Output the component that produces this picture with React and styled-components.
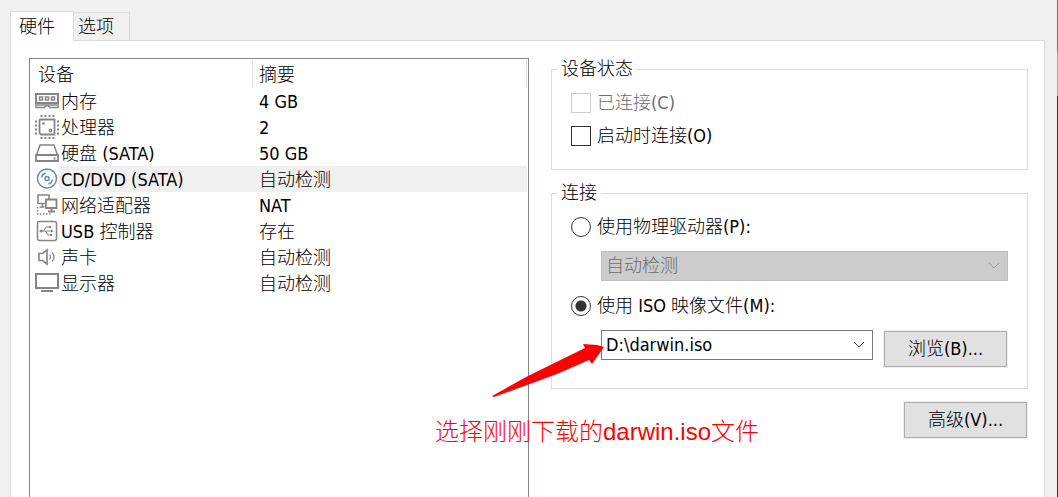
import React from "react";
import styled, { createGlobalStyle, css } from "styled-components";

const GlobalStyle = createGlobalStyle`
  *, *::before, *::after { box-sizing: border-box; }
  body {
    margin: 0;
    background: #f0f0f0;
    color: #000;
    font: 300 18px/22px "DejaVu Sans Condensed", "Noto Sans CJK SC", sans-serif;
  }
  button, select { font: inherit; color: inherit; }
`;

const Page = styled.div`
  position: relative;
  display: flex;
  min-height: 100vh;
`;

const Dialog = styled.main`
  flex: 1;
  min-width: 0;
  display: flex;
  flex-direction: column;
  padding: 11px 12px 0 10px;
`;

const BackdropEdge = styled.div`
  width: 1px;
  background: linear-gradient(#77707c 0 52px, #aaa 52px 96px, #352e31 96px);
`;

const TabList = styled.div`
  display: flex;
  align-items: flex-end;
  height: 29px;
`;

const Tab = styled.button`
  height: 28px;
  padding: 0 15px 0 4px;
  border: 1px solid #dcdcdc;
  border-width: 1px 1px 0 0;
  background: #f0f0f0;
  ${(p) =>
    p.$active &&
    css`
      height: 30px;
      margin-bottom: -1px;
      padding: 0 18px 0 8px;
      border-left-width: 1px;
      background: #fff;
      z-index: 1;
    `}
`;

const Panel = styled.section`
  flex: 1;
  display: grid;
  grid-template-columns: minmax(0, 500fr) minmax(0, 477fr);
  gap: 22px;
  padding: 17px 16px 0 18px;
  border: 1px solid #dcdcdc;
  border-bottom: 0;
  background: #fff;
`;

const DeviceList = styled.div`
  border: 1px solid #828790;
  border-bottom: 0;
  padding: 1px 1px 0 0;
`;

const DeviceTable = styled.table`
  width: 100%;
  table-layout: fixed;
  border-collapse: separate;
  border-spacing: 0;
`;

const HeadCell = styled.th`
  width: ${(p) => p.$width || "auto"};
  height: 28px;
  padding: 2px 0 0 ${(p) => p.$indent};
  border-right: 1px solid #e5e5e5;
  font-weight: inherit;
  text-align: left;
`;

const DeviceCell = styled.td`
  height: 26px;
  padding: 0 0 0 5px;
`;

const SummaryCell = styled.td`
  height: 26px;
  padding: 2px 0 0 6px;
  background: ${(p) => (p.$selected ? "#f0f0f0" : "none")};
`;

const Device = styled.div`
  display: flex;
  align-items: center;
`;

const DeviceName = styled.span`
  flex: 1;
  padding: 2px 0 0 2px;
  line-height: 24px;
  background: ${(p) => (p.$selected ? "#f0f0f0" : "none")};
`;

const DeviceIcon = styled.svg`
  flex: none;
  width: 24px;
  height: 24px;
  fill: none;
  stroke: #858585;
  stroke-width: 2;
`;

const Settings = styled.div`
  display: flex;
  flex-direction: column;
  gap: 12px;
`;

const Group = styled.fieldset`
  min-width: 0;
  margin: 0;
  padding: 6px 19px ${(p) => p.$bottom} 19px;
  border: 1px solid #dcdcdc;
`;

const GroupTitle = styled.legend`
  margin-left: -13px;
  padding: 0 4px 0 3px;
  line-height: 22px;
`;

const Option = styled.label`
  display: flex;
  align-items: center;
  gap: 6px;
  height: 33px;
  color: ${(p) => (p.$disabled ? "#6d6d6d" : "inherit")};
`;

const Check = styled.input`
  appearance: none;
  width: 20px;
  height: 20px;
  margin: 0;
  border: 1px solid #333;
  background: #fff;
  &:disabled { border-color: #ccc; }
`;

const Radio = styled(Check)`
  border-radius: 50%;
  &:checked { background: radial-gradient(circle, #333 0 5px, #fff 6px); }
`;

const FieldRow = styled.div`
  display: flex;
  align-items: flex-start;
  gap: 10px;
  margin: 8px 0 ${(p) => p.$bottom || "0"} 30px;
`;

const SelectBox = styled.div`
  position: relative;
  flex: 1;
  min-width: 0;
`;

const Select = styled.select`
  display: block;
  appearance: none;
  width: 100%;
  height: 30px;
  padding: 0 30px 0 4px;
  border: 1px solid #7a7a7a;
  border-radius: 0;
  background: #fff;
  &:disabled {
    border-color: #bfbfbf;
    background: #ccc;
    color: #6d6d6d;
    opacity: 1;
  }
`;

const Chevron = styled.svg`
  position: absolute;
  right: 8px;
  top: 11px;
  width: 12px;
  height: 8px;
  fill: none;
  stroke: ${(p) => (p.$disabled ? "#9a9a9a" : "#444")};
  pointer-events: none;
`;

const Button = styled.button`
  width: 123px;
  height: 36px;
  margin: 1px;
  padding: 0;
  border: 1px solid #adadad;
  background: #e1e1e1;
  box-shadow: 0 0 0 1px #f0f0f0;
`;

const Actions = styled.div`
  display: flex;
  justify-content: flex-end;
`;

const Pointer = styled.svg`
  position: absolute;
  left: 490px;
  top: 342px;
  width: 116px;
  height: 58px;
  fill: #f00;
  pointer-events: none;
`;

const Note = styled.p`
  position: absolute;
  left: 435px;
  top: 416px;
  margin: 0;
  color: #f00;
  font-family: "Liberation Sans", "Noto Sans CJK SC", sans-serif;
  font-size: 24px;
  line-height: 32px;
  white-space: nowrap;
`;

const icons = {
  memory: (
    <>
      <path d="M1 5h22v9H1z" />
      <path d="M4.5 8h3v3h-3zM10.5 8h3v3h-3zM16.500 8h3v3h-3z" strokeWidth="1.5" />
      <path d="M1 14v4.500h8.500l1.500-2h2l1.500 2H23V14M2 16h20" strokeWidth="1.5" />
    </>
  ),
  cpu: (
    <>
      <path d="M5 4.500h14.500v15H6l-1.500-1.500V5z" strokeWidth="1.8" />
      <circle cx="8.500" cy="8.500" r="1.300" fill="#858585" stroke="none" />
      <circle cx="15.500" cy="15.500" r="1.300" strokeWidth="1.200" />
      <path d="M5.500 1h14M5.500 23h14M1 5.500v14M23 5.500v14" strokeDasharray="2 2" />
    </>
  ),
  disk: (
    <>
      <path d="M1.500 14L5 4h14l3.500 10" strokeWidth="1.5" />
      <path d="M1 14h22v6H1z" strokeWidth="1.800" />
      <path d="M18.500 17.500h2" />
    </>
  ),
  disc: (
    <g stroke="#6c8aa0" strokeWidth="1.500">
      <circle cx="12" cy="11.5" r="9.5" />
      <circle cx="12" cy="11.5" r="2" />
      <path d="M6.500 10.500a5.500 5.500 0 0 1 4-4.500M17.500 12.500a5.500 5.500 0 0 1-4 4.500" />
    </g>
  ),
  network: (
    <>
      <path d="M10 10.500H3V2h11v4M7.500 11v3M4.500 14h5" strokeWidth="1.5" />
      <path d="M11 6.500h10.500v8.500H11zM16.500 15v3M13 18.500h7" strokeWidth="1.800" />
      <path d="M2.500 14v6M2 21h14" strokeWidth="1.5" strokeDasharray="1.5 1.5" />
    </>
  ),
  usb: (
    <>
      <rect x="2.5" y="2.5" width="19" height="19" rx="2" strokeWidth="1.500" />
      <path d="M6 12h11M8.500 12l2.500-4h3M10.500 12l2.500 4h3" strokeWidth="1" />
      <circle cx="6" cy="12" r="1.5" fill="#858585" stroke="none" />
      <path d="M16 10.500l3 1.500-3 1.500zM14 7h2v2h-2zM15 15h2v2h-2z" fill="#858585" stroke="none" />
    </>
  ),
  sound: (
    <>
      <path d="M4 8.500h3.500L12 5v14l-4.500-3.500H4z" strokeWidth="1.600" />
      <path d="M14.500 9.500q2 2.500 0 5M17 7.500q4 4.500 0 9" strokeWidth="1.2" />
    </>
  ),
  display: (
    <>
      <path d="M1 3h22v14H1z" />
      <path d="M6 20h12" />
    </>
  ),
};

const devices = [
  { icon: "memory", name: "内存", summary: "4 GB" },
  { icon: "cpu", name: "处理器", summary: "2" },
  { icon: "disk", name: "硬盘 (SATA)", summary: "50 GB" },
  { icon: "disc", name: "CD/DVD (SATA)", summary: "自动检测", selected: true },
  { icon: "network", name: "网络适配器", summary: "NAT" },
  { icon: "usb", name: "USB 控制器", summary: "存在" },
  { icon: "sound", name: "声卡", summary: "自动检测" },
  { icon: "display", name: "显示器", summary: "自动检测" },
];

function Dropdown({ label, value, disabled }) {
  return (
    <SelectBox>
      <Select aria-label={label} disabled={disabled}>
        <option>{value}</option>
      </Select>
      <Chevron viewBox="0 0 12 8" $disabled={disabled} aria-hidden="true">
        <path d="M1 1l5 5 5-5" />
      </Chevron>
    </SelectBox>
  );
}

export default function App() {
  return (
    <>
      <GlobalStyle />
      <Page>
        <Dialog>
          <TabList role="tablist">
            <Tab role="tab" aria-selected="true" $active>硬件</Tab>
            <Tab role="tab" aria-selected="false">选项</Tab>
          </TabList>
          <Panel>
            <DeviceList>
              <DeviceTable>
                <thead>
                  <tr>
                    <HeadCell $width="223px" $indent="8px">设备</HeadCell>
                    <HeadCell $indent="6px">摘要</HeadCell>
                  </tr>
                </thead>
                <tbody>
                  {devices.map((d) => (
                    <tr key={d.name}>
                      <DeviceCell>
                        <Device>
                          <DeviceIcon viewBox="0 0 24 24" aria-hidden="true">{icons[d.icon]}</DeviceIcon>
                          <DeviceName $selected={d.selected}>{d.name}</DeviceName>
                        </Device>
                      </DeviceCell>
                      <SummaryCell $selected={d.selected}>{d.summary}</SummaryCell>
                    </tr>
                  ))}
                </tbody>
              </DeviceTable>
            </DeviceList>
            <Settings>
              <Group $bottom="17px">
                <GroupTitle>设备状态</GroupTitle>
                <Option $disabled>
                  <Check type="checkbox" disabled />
                  已连接(C)
                </Option>
                <Option>
                  <Check type="checkbox" />
                  启动时连接(O)
                </Option>
              </Group>
              <Group $bottom="20px">
                <GroupTitle>连接</GroupTitle>
                <Option>
                  <Radio type="radio" name="source" />
                  使用物理驱动器(P):
                </Option>
                <FieldRow $bottom="8px">
                  <Dropdown label="物理驱动器" value="自动检测" disabled />
                </FieldRow>
                <Option>
                  <Radio type="radio" name="source" defaultChecked />
                  使用 ISO 映像文件(M):
                </Option>
                <FieldRow>
                  <Dropdown label="ISO 映像文件" value="D:\darwin.iso" />
                  <Button type="button">浏览(B)...</Button>
                </FieldRow>
              </Group>
              <Actions>
                <Button type="button">高级(V)...</Button>
              </Actions>
            </Settings>
          </Panel>
        </Dialog>
        <BackdropEdge />
        <Pointer viewBox="0 0 116 58" aria-hidden="true">
          <path d="M2 54L38 34 95 6l-2-4 14 1 7 2-12 17-3-4-32 14L4 55z" />
        </Pointer>
        <Note>选择刚刚下载的darwin.iso文件</Note>
      </Page>
    </>
  );
}
